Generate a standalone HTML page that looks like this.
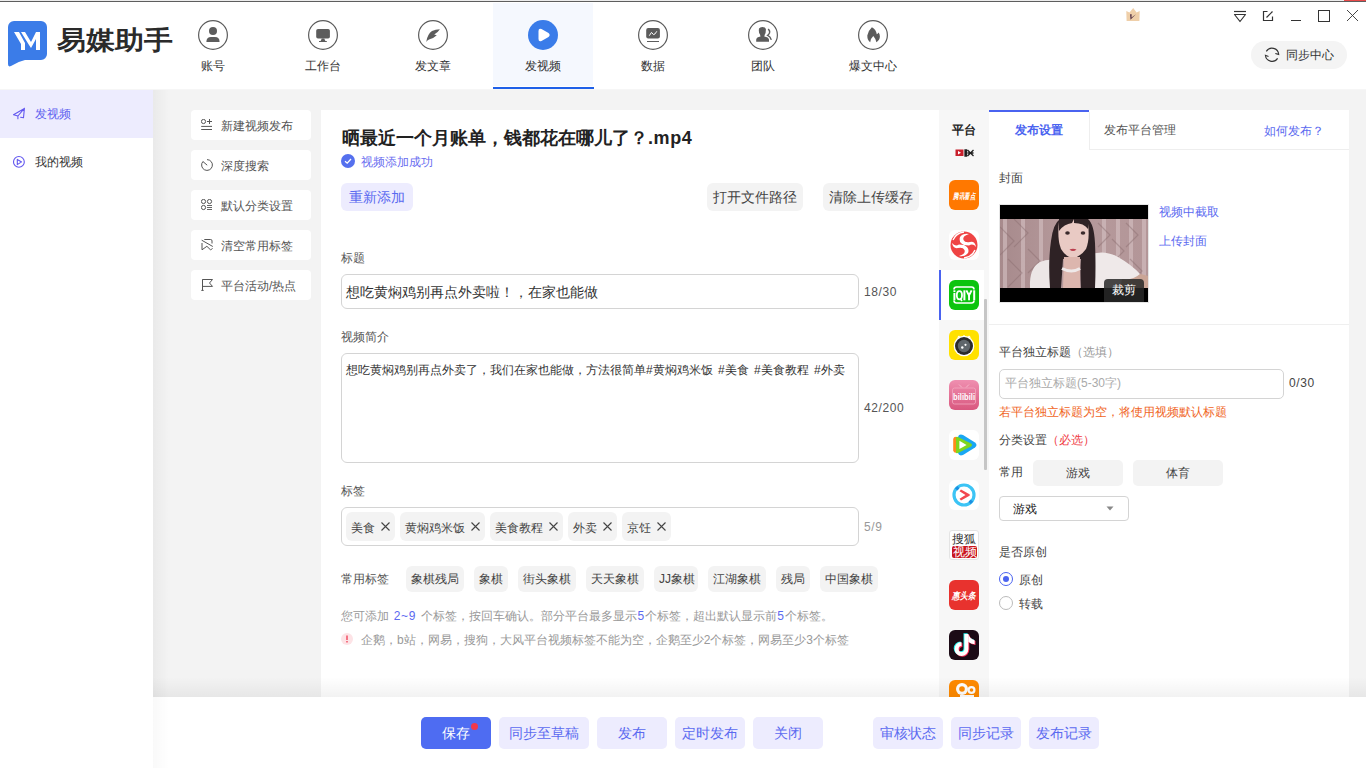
<!DOCTYPE html>
<html><head><meta charset="utf-8">
<style>
*{box-sizing:border-box;margin:0;padding:0}
html,body{width:1366px;height:768px;overflow:hidden;background:#f3f3f3;font-family:"Liberation Sans",sans-serif;color:#333}
.a{position:absolute}
.t{position:absolute;white-space:nowrap;font-size:12px;line-height:12px}
#hdr{left:0;top:0;width:1366px;height:90px;background:#fff;border-bottom:1px solid #f6f6f6}
#topline{left:0;top:0;width:1366px;height:2px;border-top:1px solid #ececec;background:#5e5e5e}
.nav{position:absolute;top:3px;width:100px;height:86px}
.nav .ic{position:absolute;left:35px;top:17px;width:30px;height:30px}
.nav .lb{position:absolute;left:0;width:100px;top:57px;text-align:center;font-size:12px;line-height:12px;color:#333}
#side{left:0;top:90px;width:153px;height:678px;background:#fff}
.sbtn{position:absolute;left:191px;width:120px;height:30px;background:#fff;border-radius:4px}
.sbtn svg{position:absolute;left:10px;top:9px}
.sbtn .t{left:30px;top:10px;color:#555}
#card{left:321px;top:110px;width:618px;height:587px;background:#fff}
#plat{left:939px;top:110px;width:50px;height:587px;background:#f7f7f7;overflow:hidden}
#rp{left:989px;top:110px;width:360px;height:587px;background:#fff}
#bot{left:153px;top:697px;width:1213px;height:71px;background:#fff}
.btn{position:absolute;top:717px;height:32px;border-radius:5px;background:#edecfe;color:#5b6af0;font-size:14px;line-height:32px;text-align:center}
.gb{position:absolute;height:28px;border-radius:6px;background:#f3f3f3;color:#444;font-size:14px;line-height:28px;text-align:center}
.inp{position:absolute;border:1px solid #d4d4d4;border-radius:6px;background:#fff}
.chip{position:absolute;top:512px;height:29px;border-radius:6px;background:#f3f3f3}
.chip .t{top:9.5px;left:5px;color:#444}
.chip .x{position:absolute;top:10px;width:9px;height:9px}
.ct{position:absolute;top:566px;height:26px;border-radius:6px;background:#f3f3f3}
.ct .t{top:7px;left:5px;color:#444}
.pi{position:absolute;left:10px;width:30px;height:30px;border-radius:6px;overflow:hidden}
</style></head><body>
<div id="hdr" class="a"></div>
<div id="topline" class="a"></div>
<div class="a" style="left:1344px;top:0;width:22px;height:1px;background:#e84a4a"></div>

<!-- logo -->
<svg class="a" style="left:8px;top:20px" width="40" height="47" viewBox="0 0 40 47">
<path d="M6 1 H33 A6 6 0 0 1 39 7 V34 A6 6 0 0 1 33 40 H17 Q10 41.5 3 46 Q0 47.5 0 44 V7 A6 6 0 0 1 6 1 Z" fill="#3b7ce8"/>
<path d="M6 12 H11 L17 23 V30 H13 V24 Z" fill="#fff"/>
<path d="M13 12 H17 L23 22 L28 12 H32 V30 H28 V19 L23 28 L21 25 Z" fill="#fff"/>
</svg>
<div class="t" style="left:57px;top:24px;font-size:29px;line-height:29px;font-weight:bold;color:#2a2a2a;transform:scaleY(.9);transform-origin:0 29px">易媒助手</div>

<!-- nav -->
<div class="nav" style="left:163px"><svg class="ic" viewBox="0 0 30 30"><circle cx="15" cy="15" r="14.4" fill="none" stroke="#5c5c5c" stroke-width="1.2"/><circle cx="15" cy="11" r="4" fill="#5c5c5c"/><path d="M8.4 21.9 Q8.4 16.9 13 16.9 H17 Q21.6 16.9 21.6 21.9 Z" fill="#5c5c5c"/></svg><div class="lb">账号</div></div>
<div class="nav" style="left:273px"><svg class="ic" viewBox="0 0 30 30"><circle cx="15" cy="15" r="14.4" fill="none" stroke="#5c5c5c" stroke-width="1.2"/><rect x="8.2" y="9" width="13.7" height="9.6" rx="1.8" fill="#5c5c5c"/><path d="M13.8 18.5 L12.6 21 H17.4 L16.2 18.5Z" fill="#5c5c5c"/><rect x="11" y="21" width="7.8" height="1" fill="#5c5c5c"/></svg><div class="lb">工作台</div></div>
<div class="nav" style="left:383px"><svg class="ic" viewBox="0 0 30 30"><circle cx="15" cy="15" r="14.4" fill="none" stroke="#5c5c5c" stroke-width="1.2"/><path d="M8.2 21.9 Q9.5 14 14 11 Q17.5 9.3 21.9 9.3 Q19.5 13 16.2 14.6 L18.8 15.3 Q15.5 18.5 11 19.6 Q9.3 20.5 8.2 21.9 Z" fill="#5c5c5c"/></svg><div class="lb">发文章</div></div>
<div class="a" style="left:493px;top:3px;width:100px;height:83px;background:#f5f8fe"></div>
<div class="a" style="left:493px;top:87px;width:101px;height:2px;background:#1f60e8"></div>
<div class="nav" style="left:493px"><svg class="ic" viewBox="0 0 30 30"><circle cx="15" cy="15" r="15" fill="#3a7ce9"/><path d="M10.5 11 Q10.5 7.8 13.5 9 L20.5 13 Q22.8 15 20.5 17 L13.5 21 Q10.5 22.2 10.5 19 Z" fill="#fff"/></svg><div class="lb">发视频</div></div>
<div class="nav" style="left:603px"><svg class="ic" viewBox="0 0 30 30"><circle cx="15" cy="15" r="14.4" fill="none" stroke="#5c5c5c" stroke-width="1.2"/><rect x="8.2" y="8" width="13.7" height="10.6" rx="2" fill="#5c5c5c"/><path d="M11.3 15.7 L13.5 12.4 L15.5 14.6 L17 13.9 L18.8 11.3" stroke="#fff" stroke-width="1" fill="none"/><rect x="9" y="21" width="12" height="1" fill="#5c5c5c"/></svg><div class="lb">数据</div></div>
<div class="nav" style="left:713px"><svg class="ic" viewBox="0 0 30 30"><circle cx="15" cy="15" r="14.4" fill="none" stroke="#5c5c5c" stroke-width="1.2"/><path d="M11 8.5 Q12 7 14.3 7 Q17.5 7.2 17.9 9 Q18 13 16.8 14.6 L16.3 16.5 Q20.5 17 21 19.5 V21.7 H8.2 V19.5 Q8.5 17 12.5 16.5 L12 14.6 Q10.8 13 10.8 10.5 Z" fill="#5c5c5c"/><path d="M20.1 9.1 Q22.2 10.5 21.5 13 Q20.8 14.5 19.7 15.3 Q22.5 16.5 23.3 19.9" stroke="#5c5c5c" stroke-width="1.4" fill="none"/></svg><div class="lb">团队</div></div>
<div class="nav" style="left:823px"><svg class="ic" viewBox="0 0 30 30"><circle cx="15" cy="15" r="14.4" fill="none" stroke="#5c5c5c" stroke-width="1.2"/><path d="M13.9 7.3 Q10 11 9.3 15.5 Q9.2 20 12.2 22.3 Q13 18 15.3 16.1 Q17.5 18.5 18.4 22.3 Q21.8 20 21.9 16.5 Q21.8 14 20.6 12.6 Q20 14 18.8 14.2 Q18 9.5 13.9 7.3 Z" fill="#5c5c5c"/></svg><div class="lb">爆文中心</div></div>

<!-- window controls -->
<svg class="a" style="left:1126px;top:8px" width="14" height="13" viewBox="0 0 14 13"><path d="M0.3 3 L3.5 4.6 L7.2 0 L10.6 4.6 L13.7 3 L13.4 12.9 H0.6 Z" fill="#efcfa9"/><path d="M4 6.2 H5.7 L5.5 9.6 L9.9 6.3 L4.5 11.7 Z" fill="#5a3848"/></svg>
<svg class="a" style="left:1233px;top:10px" width="14" height="13" viewBox="0 0 14 13"><path d="M1 1.5 H13" stroke="#333" stroke-width="1.2"/><path d="M1.5 4.5 H12.5 L7 11.5 Z" fill="none" stroke="#333" stroke-width="1.2" stroke-linejoin="round"/></svg>
<svg class="a" style="left:1262px;top:10px" width="12" height="12" viewBox="0 0 12 12"><path d="M5.5 1.5 H1.5 V10.5 H10.5 V6.5" fill="none" stroke="#333" stroke-width="1.2"/><path d="M4.5 7.5 L10.5 1.5" stroke="#333" stroke-width="1.2"/></svg>
<div class="a" style="left:1291px;top:20px;width:10px;height:1px;background:#333"></div>
<div class="a" style="left:1318px;top:10px;width:12px;height:12px;border:1.2px solid #333"></div>
<svg class="a" style="left:1346px;top:9px" width="13" height="13" viewBox="0 0 13 13"><path d="M1 1 L12 12 M12 1 L1 12" stroke="#333" stroke-width="0.9"/></svg>

<!-- sync center -->
<div class="a" style="left:1251px;top:41px;width:96px;height:28px;border-radius:14px;background:#f4f4f4"></div>
<svg class="a" style="left:1264px;top:47px" width="16" height="16" viewBox="0 0 16 16"><path d="M2.3 4.4 A6.7 6.7 0 0 1 14.7 7.4 L11.3 6.5" fill="none" stroke="#333" stroke-width="1.1"/><path d="M13.6 11.4 A6.7 6.7 0 0 1 1.4 8.3 L4.5 9.5" fill="none" stroke="#333" stroke-width="1.1"/></svg>
<div class="t" style="left:1286px;top:49px;color:#333">同步中心</div>

<!-- sidebar -->
<div id="side" class="a"></div>
<div class="a" style="left:0;top:90px;width:153px;height:48px;background:#edecfe"></div>
<svg class="a" style="left:12px;top:107px" width="14" height="13" viewBox="0 0 14 13"><path d="M1.5 7.7 L12.4 1.4 L11.5 10.8 L8.6 10.2 M12.4 1.4 L5.9 9 V11.8 M1.5 7.7 L5.9 9" fill="none" stroke="#6257ef" stroke-width="1.1" stroke-linejoin="round" stroke-linecap="round"/></svg>
<div class="t" style="left:35px;top:108px;color:#5f62f0">发视频</div>
<svg class="a" style="left:12px;top:155px" width="14" height="14" viewBox="0 0 14 14"><circle cx="6.9" cy="6.9" r="5.4" fill="none" stroke="#6257ef" stroke-width="1.1"/><path d="M5.3 4.4 L9.6 6.9 L5.3 9.6 Z" fill="none" stroke="#6257ef" stroke-width="1.1" stroke-linejoin="round"/></svg>
<div class="t" style="left:35px;top:156px;color:#333">我的视频</div>

<!-- gray area shadow left -->
<div class="a" style="left:153px;top:90px;width:16px;height:678px;background:linear-gradient(to right,rgba(0,0,0,0.04),rgba(0,0,0,0))"></div>

<!-- second column -->
<div class="sbtn" style="top:110px"><svg width="13" height="13" viewBox="0 0 13 13"><circle cx="2.5" cy="2.5" r="2.1" fill="none" stroke="#555" stroke-width="1"/><path d="M8.5 0 V5 M6 2.5 H11 M0.2 7.4 H11 M0.2 10.5 H11" stroke="#555" stroke-width="1"/></svg><div class="t">新建视频发布</div></div>
<div class="sbtn" style="top:150px"><svg width="13" height="13" viewBox="0 0 13 13"><path d="M6 0.6 A5.4 5.4 0 1 1 1.9 2.5 L6.2 6.2" fill="none" stroke="#555" stroke-width="1"/></svg><div class="t">深度搜索</div></div>
<div class="sbtn" style="top:190px"><svg width="13" height="13" viewBox="0 0 13 13"><circle cx="2.5" cy="2.5" r="2.1" fill="none" stroke="#555" stroke-width="1"/><circle cx="8.5" cy="2.5" r="2.1" fill="none" stroke="#555" stroke-width="1"/><circle cx="2.5" cy="8.5" r="2.1" fill="none" stroke="#555" stroke-width="1"/><path d="M6 6.5 H11 M6 8.5 H11 M6 10.5 H11" stroke="#555" stroke-width="0.9"/></svg><div class="t">默认分类设置</div></div>
<div class="sbtn" style="top:230px"><svg width="13" height="13" viewBox="0 0 13 13"><path d="M3.3 0.5 H9.7 Q11 0.5 11 1.9 V4.5 M0.7 1.2 L11.8 7.5 M1 4 V10.8 L5.9 7.3 L9.7 11 L11.5 9.2" fill="none" stroke="#555" stroke-width="1"/></svg><div class="t">清空常用标签</div></div>
<div class="sbtn" style="top:270px"><svg width="13" height="13" viewBox="0 0 13 13"><path d="M1.5 0.3 V11.4 M0.3 11.4 H2.7 M1.5 0.5 H11.5 L8.5 4 L11.5 7.4 H1.5" fill="none" stroke="#555" stroke-width="1"/></svg><div class="t">平台活动/热点</div></div>

<!-- main card -->
<div id="card" class="a"></div>
<div class="t" style="left:342px;top:129px;font-size:18px;line-height:18px;font-weight:bold;color:#222">晒最近一个月账单，钱都花在哪儿了？<span style="letter-spacing:.6px">.mp4</span></div>
<svg class="a" style="left:341px;top:154px" width="14" height="14" viewBox="0 0 14 14"><circle cx="7" cy="7" r="7" fill="#5570ee"/><path d="M4 7.2 L6.2 9.2 L10 5" fill="none" stroke="#fff" stroke-width="1.3"/></svg>
<div class="t" style="left:361px;top:156px;color:#6a6ef0">视频添加成功</div>
<div class="a" style="left:341px;top:183px;width:72px;height:28px;border-radius:6px;background:#edecfe;color:#5a6af0;font-size:14px;line-height:28px;text-align:center">重新添加</div>
<div class="gb" style="left:707px;top:183px;width:96px">打开文件路径</div>
<div class="gb" style="left:823px;top:183px;width:96px">清除上传缓存</div>

<div class="t" style="left:341px;top:252px;color:#555">标题</div>
<div class="inp" style="left:341px;top:274px;width:518px;height:35px"></div>
<div class="t" style="left:346px;top:285px;font-size:14px;line-height:14px;color:#333">想吃黄焖鸡别再点外卖啦！，在家也能做</div>
<div class="t" style="left:864px;top:286px;color:#555;letter-spacing:.6px">18/30</div>

<div class="t" style="left:341px;top:331px;color:#555">视频简介</div>
<div class="inp" style="left:341px;top:353px;width:518px;height:110px"></div>
<div class="t" style="left:346px;top:364px;color:#333;word-spacing:2px">想吃黄焖鸡别再点外卖了，我们在家也能做，方法很简单#黄焖鸡米饭 #美食 #美食教程 #外卖</div>
<div class="t" style="left:864px;top:402px;color:#555;letter-spacing:.6px">42/200</div>

<div class="t" style="left:341px;top:485px;color:#555">标签</div>
<div class="inp" style="left:341px;top:507px;width:518px;height:39px"></div>
<div class="t" style="left:864px;top:521px;color:#999;letter-spacing:.6px">5/9</div>

<div class="chip" style="left:346px;width:49px"><div class="t">美食</div><svg class="x" viewBox="0 0 9 9" style="left:35px"><path d="M0.5 0.5 L8.5 8.5 M8.5 0.5 L0.5 8.5" stroke="#444" stroke-width="1.1"/></svg></div>
<div class="chip" style="left:400px;width:85px"><div class="t">黄焖鸡米饭</div><svg class="x" viewBox="0 0 9 9" style="left:71px"><path d="M0.5 0.5 L8.5 8.5 M8.5 0.5 L0.5 8.5" stroke="#444" stroke-width="1.1"/></svg></div>
<div class="chip" style="left:490px;width:73px"><div class="t">美食教程</div><svg class="x" viewBox="0 0 9 9" style="left:59px"><path d="M0.5 0.5 L8.5 8.5 M8.5 0.5 L0.5 8.5" stroke="#444" stroke-width="1.1"/></svg></div>
<div class="chip" style="left:568px;width:49px"><div class="t">外卖</div><svg class="x" viewBox="0 0 9 9" style="left:35px"><path d="M0.5 0.5 L8.5 8.5 M8.5 0.5 L0.5 8.5" stroke="#444" stroke-width="1.1"/></svg></div>
<div class="chip" style="left:622px;width:49px"><div class="t">京饪</div><svg class="x" viewBox="0 0 9 9" style="left:35px"><path d="M0.5 0.5 L8.5 8.5 M8.5 0.5 L0.5 8.5" stroke="#444" stroke-width="1.1"/></svg></div>
<div class="ct" style="left:406px;width:58px"><div class="t">象棋残局</div></div>
<div class="ct" style="left:474px;width:34px"><div class="t">象棋</div></div>
<div class="ct" style="left:518px;width:58px"><div class="t">街头象棋</div></div>
<div class="ct" style="left:586px;width:58px"><div class="t">天天象棋</div></div>
<div class="ct" style="left:654px;width:44px"><div class="t">JJ象棋</div></div>
<div class="ct" style="left:708px;width:58px"><div class="t">江湖象棋</div></div>
<div class="ct" style="left:776px;width:34px"><div class="t">残局</div></div>
<div class="ct" style="left:820px;width:58px"><div class="t">中国象棋</div></div>
<div class="t" style="left:341px;top:573px;color:#555">常用标签</div>

<div class="t" style="left:341px;top:610px;color:#999;word-spacing:1.5px">您可添加 <span style="color:#5b6af0;letter-spacing:.6px">2~9</span> 个标签，按回车确认。部分平台最多显示<span style="color:#5b6af0;margin:0 .6px">5</span>个标签，超出默认显示前<span style="color:#5b6af0;margin:0 .6px">5</span>个标签。</div>
<svg class="a" style="left:341px;top:633px" width="12" height="12" viewBox="0 0 12 12"><circle cx="6" cy="6" r="6" fill="#fde3e6"/><rect x="5.3" y="2.5" width="1.4" height="4.5" fill="#f0435a"/><rect x="5.3" y="8" width="1.4" height="1.5" fill="#f0435a"/></svg>
<div class="t" style="left:361px;top:634px;color:#999">企鹅，b站，网易，搜狗，大风平台视频标签不能为空，企鹅至少2个标签，网易至少3个标签</div>

<!-- platforms -->
<div id="plat" class="a">
 <div class="t" style="left:13px;top:14px;font-weight:bold;color:#222">平台</div>
 <svg class="a" style="left:16px;top:39px" width="20" height="8" viewBox="0 0 20 8"><rect x="0.5" y="0.5" width="8" height="6.5" fill="#c8202c"/><path d="M3 2 L6 3.8 L3 5.5 Z" fill="#fff"/><path d="M10 1 H11.5 V7 H10Z M12.5 1 L18.5 7 M18.5 1 L12.5 7 M12.5 4 H18.5" stroke="#222" stroke-width="1.3"/></svg>
 <div class="pi" style="top:70px;background:#ff7800"><svg width="30" height="30" viewBox="0 0 30 30"><text x="4" y="18.5" textLength="22" lengthAdjust="spacingAndGlyphs" font-family="Liberation Sans" font-style="italic" font-weight="bold" font-size="8" fill="#fff">腾讯看点</text></svg></div>
 <div class="pi" style="top:120px;background:#fff"><svg width="30" height="30" viewBox="0 0 30 30"><circle cx="15" cy="15" r="13.5" fill="#ef4444"/><path d="M15 15 Q9 12 11 7 Q14 3 20 4 Q13 6 14.5 10 Q16 13 21 12 Q26 11 27 17 Q24 13 20 15.5 Z" fill="#fff"/><path d="M15 15 Q21 18 19 23 Q16 27 10 26 Q17 24 15.5 20 Q14 17 9 18 Q4 19 3 13 Q6 17 10 14.5 Z" fill="#fff"/><path d="M4 10 Q7 3 15 2" stroke="#fff" stroke-width="1.3" fill="none"/><path d="M26 20 Q23 27 15 28" stroke="#fff" stroke-width="1.3" fill="none"/></svg></div>
 <div class="a" style="left:0;top:160px;width:45px;height:50px;background:#fff"></div>
 <div class="a" style="left:0;top:160px;width:2px;height:50px;background:#4a63f0"></div>
 <div class="pi" style="top:170px;background:#0cc40e"><svg width="30" height="30" viewBox="0 0 30 30"><path d="M5 9.5 Q5 7 7.5 7 H22.5 Q25 7 25 9.5 M5 20.5 Q5 23 7.5 23 H22.5 Q25 23 25 20.5" stroke="#fff" stroke-width="1.6" fill="none"/><g fill="#fff"><rect x="4.4" y="10.3" width="2" height="1.8"/><rect x="4.4" y="13" width="2" height="7.3"/><rect x="14.4" y="10.3" width="2" height="10"/><rect x="24.2" y="10.3" width="2" height="10"/><rect x="19.1" y="15" width="1.9" height="5.3"/></g><ellipse cx="10.4" cy="15.3" rx="2.6" ry="4.1" stroke="#fff" stroke-width="1.8" fill="none"/><path d="M11 18.5 L13 21" stroke="#fff" stroke-width="1.6"/><path d="M17.4 10.3 L20 15.5 L22.6 10.3" stroke="#fff" stroke-width="1.9" fill="none"/></svg></div>
 <div class="pi" style="top:220px;background:#ffe100"><svg width="30" height="30" viewBox="0 0 30 30"><circle cx="15" cy="16" r="10.3" fill="#fff"/><path d="M8 7.5 L10 5.5 L12 8 Z M22 7.5 L20 5.5 L18 8 Z M14 5.5 H16 V7 H14Z" fill="#fff"/><circle cx="15" cy="16" r="9" fill="#2b2b2b"/><circle cx="15" cy="16" r="6.2" fill="#5f666b"/><circle cx="13.3" cy="17.5" r="1.2" fill="#fff"/><circle cx="16.5" cy="14.8" r="1.1" fill="#fff"/></svg></div>
 <div class="pi" style="top:270px;background:linear-gradient(#ef8fb0,#d9587f)"><svg width="30" height="30" viewBox="0 0 30 30"><path d="M10 4.5 L13 7.5 M20 4.5 L17 7.5" stroke="#f5b5c8" stroke-width="1"/><rect x="3.5" y="8" width="23" height="16" rx="2" fill="none" stroke="#f3a7bf" stroke-width="0.8"/><text x="4" y="19.5" textLength="22" lengthAdjust="spacingAndGlyphs" font-family="Liberation Sans" font-weight="bold" font-size="9" fill="#fff">bilibili</text></svg></div>
 <div class="pi" style="top:320px;background:#fff"><svg width="30" height="30" viewBox="0 0 30 30"><path d="M9 7 Q10 3.5 14 5 L26 12.5 Q29 15 26 17.5 L14 25 Q10 26.5 9 23 Z" fill="#19a7f3"/><path d="M6.8 7.5 Q7 6.5 9 7 L22 13.5 Q24 15 22 16.5 L9 23 Q7 23.5 6.8 22.5 Z" fill="#7fd61e"/><path d="M4.2 9 Q4.5 6.7 7 6.7 V22.8 Q4.5 22.8 4.2 20.5 Z" fill="#ff8a1c"/><path d="M10.4 10.7 L17.6 14.9 L10.4 19.1 Z" fill="#fff"/></svg></div>
 <div class="pi" style="top:370px;background:#fff"><svg width="30" height="30" viewBox="0 0 30 30"><circle cx="15" cy="15" r="10" fill="none" stroke="#3cc4f5" stroke-width="3.2"/><path d="M7.2 9.5 A10 10 0 0 1 9.5 7.2" stroke="#1d8ee0" stroke-width="3.2" fill="none"/><path d="M22.8 20.5 A10 10 0 0 1 20.5 22.8" stroke="#1d8ee0" stroke-width="3.2" fill="none"/><path d="M10.5 11.2 L12 9.5 L20.5 14.3 Q21.3 15 20.5 15.7 L12 20.5 L10.5 18.8 L16.5 15 Z" fill="#f2484f"/></svg></div>
 <div class="pi" style="top:420px;background:#fff;border:1px solid #e4e4e4;border-radius:3px"><div class="t" style="left:1.5px;top:2px;font-size:12px;line-height:12px;color:#333">搜狐</div><div class="a" style="left:2px;top:15px;width:25px;height:12px;border-radius:2px;background:#c9161f"></div><div class="t" style="left:2.5px;top:15.5px;font-size:11.5px;line-height:11px;color:#fff">视频</div></div>
 <div class="pi" style="top:470px;background:#e8322e"><svg width="30" height="30" viewBox="0 0 30 30"><text x="3" y="19" textLength="24" lengthAdjust="spacingAndGlyphs" font-family="Liberation Sans" font-style="italic" font-weight="bold" font-size="9.5" fill="#fff">惠头条</text></svg></div>
 <div class="pi" style="top:520px;background:#1c0b16"><svg width="30" height="30" viewBox="0 0 30 30"><g transform="translate(-0.9,-0.7)"><path d="M17.4 4 V19 A4.9 4.9 0 1 1 12.5 14.1" stroke="#25f4ee" stroke-width="4" fill="none"/><path d="M19.3 3.8 Q20.5 9 25.6 10.3 V14.2 Q21.8 14 19.3 11.8 Z" fill="#25f4ee"/></g><g transform="translate(0.9,0.8)"><path d="M17.4 4 V19 A4.9 4.9 0 1 1 12.5 14.1" stroke="#fe2c55" stroke-width="4" fill="none"/><path d="M19.3 3.8 Q20.5 9 25.6 10.3 V14.2 Q21.8 14 19.3 11.8 Z" fill="#fe2c55"/></g><path d="M17.4 4 V19 A4.9 4.9 0 1 1 12.5 14.1" stroke="#fff" stroke-width="4" fill="none"/><path d="M19.3 3.8 Q20.5 9 25.6 10.3 V14.2 Q21.8 14 19.3 11.8 Z" fill="#fff"/></svg></div>
 <div class="pi" style="top:570px;background:#ff8a00"><svg width="30" height="30" viewBox="0 0 30 30"><circle cx="13" cy="9" r="6" fill="#fff"/><circle cx="13" cy="9" r="2.8" fill="#ff8a00"/><circle cx="22.5" cy="10" r="4" fill="#fff"/><circle cx="22.5" cy="10" r="1.8" fill="#ff8a00"/><path d="M11 15 H25 V18 H11Z" fill="#fff"/></svg></div>
 <div class="a" style="left:45px;top:189px;width:3px;height:171px;border-radius:1px;background:#c6c6c6"></div>
</div>

<!-- right panel -->
<div id="rp" class="a"></div>
<div class="a" style="left:989px;top:110px;width:100px;height:2px;background:#4a63f0"></div>
<div class="a" style="left:1089px;top:112px;width:1px;height:38px;background:#eeeeee"></div>
<div class="a" style="left:1089px;top:149px;width:260px;height:1px;background:#eeeeee"></div>
<div class="t" style="left:1015px;top:124px;color:#4a63f0;font-weight:bold">发布设置</div>
<div class="t" style="left:1104px;top:124px;color:#555">发布平台管理</div>
<div class="t" style="left:1264px;top:125px;color:#5b6af0">如何发布？</div>
<div class="t" style="left:999px;top:172px;color:#444">封面</div>
<div class="a" style="left:999px;top:204px;width:150px;height:99px;border:1px solid #e6e6e6;background:#000;overflow:hidden">
 <svg class="a" style="left:0;top:14px" width="148" height="69" viewBox="0 0 148 69">
  <defs><linearGradient id="bg1" x1="0" x2="1"><stop offset="0" stop-color="#a78a8c"/><stop offset="0.45" stop-color="#b69a9c"/><stop offset="1" stop-color="#b39698"/></linearGradient></defs>
  <rect width="148" height="69" fill="url(#bg1)"/>
  <g stroke="#d6c2c4" stroke-width="4" opacity="0.6"><path d="M5 0 V69 M23 0 V69 M41 0 V69 M104 0 V69 M118 0 V69 M131 0 V69 M144 0 V69"/></g>
  <g stroke="#8a6c6e" stroke-width="1.2" opacity="0.45" fill="none"><path d="M0 8 L14 22 L0 36 M8 40 L22 54 L8 68 M14 0 L28 14 L14 28 M28 30 L40 42 L28 54 M98 4 L110 16 L98 28 M112 20 L124 32 L112 44 M126 4 L138 16 L126 28 M130 40 L142 52 L130 64"/></g>
  <path d="M118 58 Q134 52 148 57 V69 H116 Z" fill="#caa596"/>
  <path d="M30 69 Q29 49 40 43 Q47 40 54 41 L57 69 Z" fill="#ece6e6"/>
  <path d="M88 36 Q104 30 118 38 Q132 46 140 55 Q132 62 122 60 L120 69 H86 Z" fill="#efe9e9"/>
  <path d="M50 69 Q48 42 51 22 Q53 5 60 0 H88 Q94 5 95 24 Q96 48 95 69 H81 Q80 52 81 40 H63 Q62 56 61 69 Z" fill="#2e2225"/>
  <path d="M59 3 Q60 0 66 0 H82 Q87 0 88 5 Q90 20 86 30 Q80 38.5 73 38.5 Q66 38.5 61 30 Q57 20 59 3 Z" fill="#e9cac4"/>
  <path d="M59 0 H74 L72 4 Q64 5 59 12 Z M74 0 H88 V10 Q84 4 74 4 Z" fill="#2e2225"/>
  <ellipse cx="67.5" cy="14" rx="2.3" ry="1.7" fill="#3a2a2c"/><ellipse cx="83" cy="14" rx="2.3" ry="1.7" fill="#3a2a2c"/>
  <path d="M69.5 30.5 Q73 29 76.5 30.5 Q73 33.5 69.5 30.5 Z" fill="#bb3f4e"/>
  <path d="M64 38 H80 V69 H63 Z" fill="#dcb6ae"/>
  <path d="M62 49.5 Q71.5 54.5 80 49.5" stroke="#efe9e9" stroke-width="3" fill="none"/>
 </svg>
 <div class="a" style="left:104px;top:74px;width:40px;height:24px;border-radius:4px 4px 0 0;background:rgba(40,40,40,0.85)"></div>
 <div class="t" style="left:112px;top:79px;color:#fff">裁剪</div>
</div>
<div class="t" style="left:1159px;top:206px;color:#5b6af0">视频中截取</div>
<div class="t" style="left:1159px;top:235px;color:#5b6af0">上传封面</div>
<div class="a" style="left:989px;top:324px;width:360px;height:1px;background:#efefef"></div>
<div class="t" style="left:999px;top:346px;color:#444">平台独立标题<span style="color:#999">（选填）</span></div>
<div class="inp" style="left:999px;top:369px;width:285px;height:30px;border-radius:5px"></div>
<div class="t" style="left:1005px;top:377px;color:#aaa">平台独立标题(5-30字)</div>
<div class="t" style="left:1289px;top:377px;color:#444;letter-spacing:.6px">0/30</div>
<div class="t" style="left:999px;top:406px;color:#f0651e">若平台独立标题为空，将使用视频默认标题</div>
<div class="t" style="left:999px;top:434px;color:#444">分类设置<span style="color:#f03c46">（必选）</span></div>
<div class="t" style="left:999px;top:466px;color:#444">常用</div>
<div class="gb" style="left:1033px;top:460px;width:90px;height:26px;line-height:26px;font-size:12px;border-radius:5px">游戏</div>
<div class="gb" style="left:1133px;top:460px;width:90px;height:26px;line-height:26px;font-size:12px;border-radius:5px">体育</div>
<div class="inp" style="left:999px;top:496px;width:130px;height:25px;border-radius:4px"></div>
<div class="t" style="left:1013px;top:503px;color:#222">游戏</div>
<svg class="a" style="left:1106px;top:506px" width="8" height="5" viewBox="0 0 8 5"><path d="M0.5 0.5 H7.5 L4 4.5 Z" fill="#888"/></svg>
<div class="t" style="left:999px;top:546px;color:#444">是否原创</div>
<div class="a" style="left:999px;top:572px;width:14px;height:14px;border-radius:7px;border:1px solid #4a63f0;background:#fff"></div>
<div class="a" style="left:1003px;top:576px;width:6px;height:6px;border-radius:3px;background:#4a63f0"></div>
<div class="t" style="left:1019px;top:574px;color:#444">原创</div>
<div class="a" style="left:999px;top:596px;width:14px;height:14px;border-radius:7px;border:1px solid #bbb;background:#fff"></div>
<div class="t" style="left:1019px;top:598px;color:#444">转载</div>

<!-- bottom shadow -->
<div class="a" style="left:153px;top:677px;width:1213px;height:20px;background:linear-gradient(to bottom,rgba(0,0,0,0),rgba(0,0,0,0.05))"></div>
<div id="bot" class="a"></div>
<div class="a" style="left:153px;top:697px;width:16px;height:71px;background:linear-gradient(to right,rgba(0,0,0,0.025),rgba(0,0,0,0))"></div>
<div class="btn" style="left:421px;width:70px;background:#4e6cf2;color:#fff">保存</div>
<div class="a" style="left:471px;top:723px;width:7px;height:7px;border-radius:4px;background:#f2384a"></div>
<div class="btn" style="left:499px;width:90px">同步至草稿</div>
<div class="btn" style="left:597px;width:70px">发布</div>
<div class="btn" style="left:675px;width:70px">定时发布</div>
<div class="btn" style="left:753px;width:70px">关闭</div>
<div class="btn" style="left:873px;width:70px">审核状态</div>
<div class="btn" style="left:951px;width:70px">同步记录</div>
<div class="btn" style="left:1029px;width:70px">发布记录</div>
</body></html>
